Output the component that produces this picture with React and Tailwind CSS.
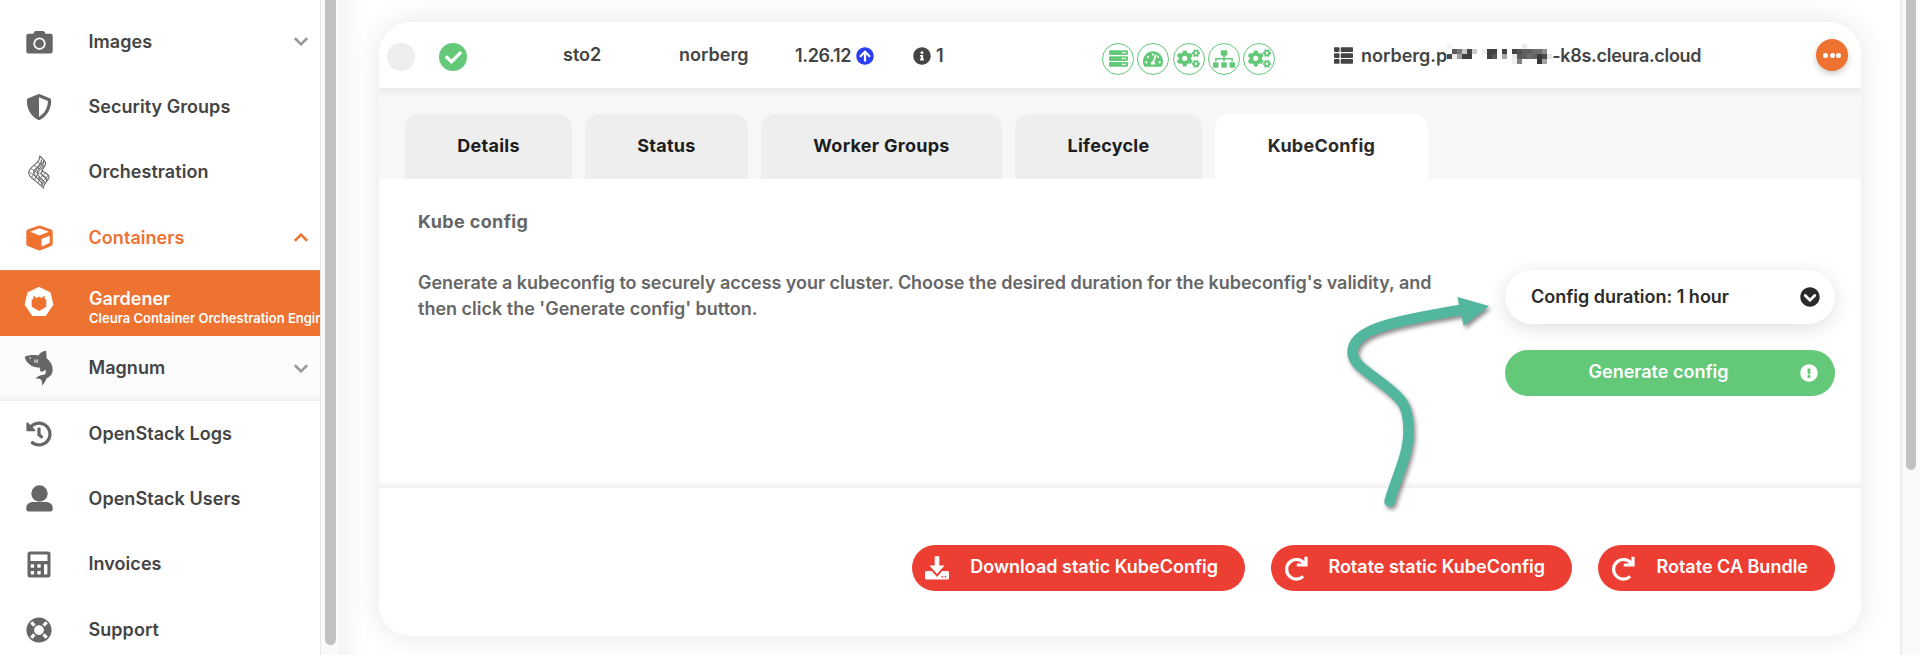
import React from "react";
import {
  FaShieldAlt,
  FaHistory,
  FaLifeRing,
  FaCheck,
  FaServer,
  FaTachometerAlt,
  FaCogs,
  FaSitemap,
  FaThList,
  FaInfoCircle,
  FaArrowCircleUp,
  FaChevronCircleDown,
  FaExclamationCircle,
} from "react-icons/fa";

const CameraIcon = () => (
  <svg width="27" height="24" viewBox="0 0 27 24" fill="currentColor">
    <path d="M8 2.2Q8.4 1 9.8 1H17Q18.4 1 18.8 2.2L19.4 3.7H24.5Q26.7 3.7 26.7 5.9V21.3Q26.7 23.5 24.5 23.5H2.5Q.3 23.5 .3 21.3V5.9Q.3 3.7 2.5 3.7H7.4Z" />
    <circle cx="13.5" cy="13.7" r="5.3" fill="none" stroke="#fff" strokeWidth="1.8" />
  </svg>
);

const HeatIcon = () => (
  <svg width="22" height="34" viewBox="0 0 22 34" fill="none" stroke="currentColor" strokeWidth="1.100">
    <path d="M11.500 .8C15 4 18 6 17.500 9C17 12 14 13.500 14.500 16C17 18 21.500 19.500 21 22.500C20.500 25.500 16 27.500 15.200 33C12 29 8 26.500 4.500 23.500C2 21.500 .6 20 .7 17.500C1 13 6 11 9 7.500C11.500 5 12.500 3.500 11.500 .8Z" />
    <path d="M13.500 4.500C14 9 10 11.500 7.500 14C4.500 17 5.500 19.500 8 22C11 25 14.500 27.500 15.200 31M15.500 5.500C16.500 10 12.500 12 10.500 14.500C8 18 9.500 20 12 22.500C14.500 24.500 16.500 26 16 28.500M14.500 16C12.500 18 13 19.500 15 21C17 22.500 19 23.500 18.500 26" />
    <path d="M9.500 7L16.500 11.500M6 10.500L14.500 15.500M3 13.500L11.500 19M1 17L9 22M16.500 5.500L10 12.500L3.500 22.500M17 10L11 16L6.500 25M17.500 18L12.500 22.500L10 28M20.500 20L15.500 25.500L13 30.500M11.500 18L20.500 24M10 22.500L17.500 28" strokeWidth=".8" />
  </svg>
);

const CubeIcon = () => (
  <svg width="27" height="26" viewBox="0 0 27 26">
    <path
      d="M12.400 .8Q13.500 .3 14.600 .8L25.300 4.600Q26.700 5.200 26.700 6.700V18.700Q26.700 20.200 25.300 20.900L14.700 25.300Q13.500 25.800 12.300 25.300L1.700 20.900Q.3 20.200 .3 18.700V6.700Q.3 5.200 1.700 4.600Z"
      fill="currentColor"
    />
    <path d="M13.500 3.300L22.900 6.700L13.500 10.400L4.100 6.700Z" fill="#fff" />
    <path d="M15.600 14L23.700 10.700V18L15.600 21.600Z" fill="#fff" />
  </svg>
);

const GardenerIcon = () => (
  <svg width="30" height="30" viewBox="0 0 30 30">
    <path
      d="M15 .8L25.800 6L28.600 17.600L21.200 28.200H8.800L1.400 17.600L4.200 6Z"
      fill="#fff"
      stroke="#fff"
      strokeWidth="1.6"
      strokeLinejoin="round"
    />
    <path d="M9.300 8.400L12.500 11L15 9.500L17.500 11L20.700 8.400V12L22.300 12.500V19.800L15 24L7.700 19.800V12.500L9.300 12Z" fill="#ee7230" />
  </svg>
);

const SharkIcon = () => (
  <svg width="30" height="36" viewBox="0 0 30 36">
    <path
      d="M.7 6.800C4 5 9 4.600 14.500 5.400C16 3 19 .8 21.500 .8C22 .8 22.300 1.200 22.300 1.800L22.600 8.200C27.500 12 29.600 17.500 28.300 22.500C27.600 25 25.500 27.200 22.700 28.200C21.900 30.500 20.500 33 18 35.400C18.500 32.500 17.700 30.500 16.800 29.500C15.500 28.800 13.500 28.400 11.200 28.700C13.500 26 17 24.800 20 24.800C22 24 22.400 21.500 21.200 19.500C20.500 21 18.500 22.500 16.800 21.500C15.500 20.500 15.500 19 16.500 17.800C12.500 17.600 8 17 5.500 14.300C3 12.500 1.300 10 .7 6.800Z"
      fill="currentColor"
    />
    <path d="M11 9.500V13M13.200 9.300V12.800" stroke="#fff" strokeWidth="1" />
    <circle cx="6.300" cy="8" r=".8" fill="#fff" />
  </svg>
);

const UserIcon = () => (
  <svg width="27" height="27" viewBox="0 0 27 27" fill="currentColor">
    <circle cx="13.500" cy="8.500" r="8.200" />
    <path d="M7.500 17H19.500C24 17 26.700 19.500 26.700 23V24.200Q26.700 26.500 24.400 26.500H2.600Q.3 26.500 .3 24.200V23C.3 19.500 3 17 7.500 17Z" />
  </svg>
);

const CalculatorIcon = () => (
  <svg width="24" height="27" viewBox="0 0 24 27">
    <rect x=".5" y=".5" width="23" height="26" rx="2.500" fill="currentColor" />
    <g fill="#fff">
      <rect x="3.500" y="3.500" width="17" height="6.500" />
      <rect x="3.700" y="13.300" width="3.400" height="3.400" rx=".6" />
      <rect x="10.300" y="13.300" width="3.400" height="3.400" rx=".6" />
      <rect x="3.700" y="20" width="3.400" height="3.400" rx=".6" />
      <rect x="10.300" y="20" width="3.400" height="3.400" rx=".6" />
      <rect x="17" y="13.300" width="3.400" height="10.100" rx=".6" />
    </g>
  </svg>
);

const Chevron = ({ up }) => (
  <svg width="14" height="9" viewBox="0 0 14 9" fill="none" strokeWidth="2.600" className={up ? "text-[#ee7230]" : "text-[#999]"}>
    <path d={up ? "M.9 7.800L7 1.700L13.100 7.800" : "M.9 1.200L7 7.300L13.100 1.200"} stroke="currentColor" />
  </svg>
);

const DownloadIcon = () => (
  <svg width="24" height="25" viewBox="0 0 24 25" fill="#fff">
    <path d="M1.500 15H22.500Q24 15 24 16.500V22Q24 23.500 22.500 23.500H1.500Q0 23.500 0 22V16.500Q0 15 1.500 15Z" />
    <path d="M9.700 .3H14.300V9.500H19.800L12 18.500L4.200 9.500H9.700Z" stroke="#ec3e33" strokeWidth="3.200" />
    <path d="M9.700 .3H14.300V9.500H19.600L12 18L4.400 9.500H9.700Z" />
    <circle cx="17.300" cy="20.800" r=".9" fill="#ec3e33" />
    <circle cx="20.500" cy="20.800" r=".9" fill="#ec3e33" />
  </svg>
);

const RotateIcon = () => (
  <svg width="25" height="25" viewBox="0 0 25 25" fill="none" stroke="#fff" strokeWidth="3.200">
    <path d="M19.200 20.400A9.800 9.800 0 1 1 20.400 7.600" />
    <path d="M22 .8V9H12.800" />
    <path d="M17 8.500L22.500 3V9Z" fill="#fff" stroke="none" />
  </svg>
);

const nav = [
  { label: "Images", icon: <CameraIcon />, chevron: true },
  { label: "Security Groups", icon: <FaShieldAlt size={26} /> },
  { label: "Orchestration", icon: <HeatIcon /> },
  { label: "Containers", icon: <CubeIcon />, chevron: true, active: true },
];

const navBottom = [
  { label: "OpenStack Logs", icon: <FaHistory size={26} /> },
  { label: "OpenStack Users", icon: <UserIcon /> },
  { label: "Invoices", icon: <CalculatorIcon /> },
  { label: "Support", icon: <FaLifeRing size={26} /> },
];

function NavItem({ label, icon, chevron, active }) {
  return (
    <div className={`flex h-[65.33px] shrink-0 items-center pr-[12.500px] ${active ? "text-[#ee7230]" : "text-[#666]"}`}>
      <span className="flex w-[78px] justify-center">{icon}</span>
      <span className={`ml-[10.500px] flex-1 tracking-[0.050px] ${active ? "" : "text-[#444]"}`}>{label}</span>
      {chevron && <Chevron up={active} />}
    </div>
  );
}

function Sidebar() {
  return (
    <aside className="flex h-full w-[339px] shrink-0">
      <nav className="flex w-[320px] flex-col overflow-hidden pt-[9px]">
        {nav.map((item) => (
          <NavItem key={item.label} {...item} />
        ))}
        <div className="flex h-[65.33px] shrink-0 border-t border-[#e2824f] bg-[#ee7230] text-white">
          <span className="flex w-[77px] shrink-0 justify-center pt-[16px]">
            <GardenerIcon />
          </span>
          <div className="ml-[12px] pt-[17px] whitespace-nowrap">
            <div className="leading-[22px]">Gardener</div>
            <div className="text-[13px] leading-[17px]">Cleura Container Orchestration Engine</div>
          </div>
        </div>
        <div className="shrink-0 bg-[#fcfcfc] shadow-[inset_0_-10px_10px_-8px_rgba(0,0,0,0.07)]">
          <NavItem label="Magnum" icon={<SharkIcon />} chevron />
        </div>
        {navBottom.map((item) => (
          <NavItem key={item.label} {...item} />
        ))}
      </nav>
      <div className="w-[19px] border-l border-[#e6e6e6] bg-[#fafafa] pl-[4px]">
        <div className="h-[645px] w-[11px] rounded-b-full bg-[#c1c1c1]" />
      </div>
    </aside>
  );
}

const statusIcons = [
  <FaServer size={19} />,
  <FaTachometerAlt size={20} />,
  <FaCogs size={23} />,
  <FaSitemap size={22} />,
  <FaCogs size={23} />,
];

/* Redacted part of the host name: [column, row, grey level] on a 5px grid */
const mosaic = [
  [0, 0, 245], [15, 0, 236],
  [1, 1, 90], [2, 1, 120], [3, 1, 200], [4, 1, 70], [5, 1, 205], [7, 1, 238], [8, 1, 66], [9, 1, 66], [11, 1, 66],
  [13, 1, 66], [14, 1, 80], [15, 1, 95], [16, 1, 95], [17, 1, 110], [18, 1, 110], [19, 1, 140],
  [0, 2, 75], [1, 2, 235], [2, 2, 160], [3, 2, 66], [4, 2, 66], [8, 2, 66], [9, 2, 90], [11, 2, 165], [13, 2, 235],
  [14, 2, 90], [15, 2, 95], [16, 2, 110], [17, 2, 100], [18, 2, 60], [19, 2, 75], [20, 2, 232],
  [13, 3, 238], [14, 3, 130], [18, 3, 55], [19, 3, 165],
];

function ClusterRow() {
  return (
    <div className="relative z-10 grid h-[66px] shrink-0 grid-cols-[52px_132px_116px_116px_118px_188px_232px_475px_1fr] items-center bg-white pl-[8px] text-[#444] shadow-[0_4px_8px_rgba(0,0,0,0.06)]">
      <span className="mt-[4px] size-[28px] rounded-full bg-[#eee]" />
      <span className="mt-[4px] flex size-[28px] items-center justify-center rounded-full bg-[#63c979] text-white">
        <FaCheck size={17} />
      </span>
      <span className="-ml-[8px]">sto2</span>
      <span className="-ml-[8px] tracking-[0.050px]">norberg</span>
      <span className="mt-[2px] -ml-[8px] flex items-center gap-[5px] tracking-[-0.35px]">
        1.26.12 <FaArrowCircleUp size={18} className="text-[#2b3ff2]" />
      </span>
      <span className="mt-[2px] -ml-[8px] flex items-center gap-[5px]">
        <FaInfoCircle size={18} /> 1
      </span>
      <span className="mt-[7px] -ml-[7px] flex gap-[3.250px]">
        {statusIcons.map((icon, i) => (
          <span
            key={i}
            className="flex size-[32px] shrink-0 items-center justify-center rounded-full border-[1.500px] border-[#63c979] text-[#63c979]"
          >
            {icon}
          </span>
        ))}
      </span>
      <span className="mt-[1px] -ml-[7px] flex items-center">
        <FaThList size={19} />
        <span className="ml-[8px]">norberg.p</span>
        <svg width="105" height="20" viewBox="0 0 105 20" shapeRendering="crispEdges" className="mt-[-3px]">
          {mosaic.map(([x, y, v]) => (
            <rect key={`${x}-${y}`} x={x * 5} y={y * 5} width="5" height="5" fill={`rgb(${v},${v},${v})`} />
          ))}
        </svg>
        <span className="tracking-[-0.3px]">-k8s.cleura.cloud</span>
      </span>
      <span className="flex size-[32px] items-center justify-center gap-[1.500px] rounded-full bg-[#ee7230] shadow-[0_3px_6px_rgba(0,0,0,0.2)]">
        <i className="size-[5px] rounded-full bg-white" />
        <i className="size-[5px] rounded-full bg-white" />
        <i className="size-[5px] rounded-full bg-white" />
      </span>
    </div>
  );
}

function Tabs() {
  const tab = "flex h-[65px] items-center justify-center rounded-t-[14px] pb-[1px]";
  return (
    <div className="flex h-[91px] shrink-0 items-end gap-[13px] bg-[#f7f7f7] pl-[26px] font-bold tracking-[0.27px] text-[#1d1d1d]">
      <div className={`${tab} w-[167px] bg-[#eee]`}>Details</div>
      <div className={`${tab} w-[163px] bg-[#eee]`}>Status</div>
      <div className={`${tab} w-[241px] bg-[#eee]`}>Worker Groups</div>
      <div className={`${tab} w-[187px] bg-[#eee]`}>Lifecycle</div>
      <div className={`${tab} w-[213px] bg-white text-[#2b2b2b]`}>KubeConfig</div>
    </div>
  );
}

function RedButton({ icon, children, className }) {
  return (
    <button className={`flex h-[46px] items-center rounded-full bg-[#ec3e33] pl-[12.500px] text-white ${className}`}>
      {icon}
      <span className="-mt-[3px] ml-auto pr-[27px]">{children}</span>
    </button>
  );
}

function Arrow() {
  return (
    <svg
      className="pointer-events-none absolute top-[285px] left-[1340px] z-20 drop-shadow-[2px_3px_2px_rgba(0,0,0,0.45)]"
      width="160"
      height="230"
      viewBox="1340 285 160 230"
    >
      <path
        d="M1389.500 501.500C1397 475 1408.500 455 1408.500 431C1408.500 405 1403 399 1379 381C1364 369.500 1352.500 363 1352.500 352C1352.500 330 1388 322 1463 309.500"
        fill="none"
        stroke="#53b7a0"
        strokeWidth="10.500"
        strokeLinecap="round"
      />
      <path d="M1457.400 297L1489 306L1463.700 325.700Z" fill="#53b7a0" />
    </svg>
  );
}

export default function App() {
  return (
    <div className="relative flex h-[655px] w-full overflow-hidden bg-white font-['Inter',sans-serif] text-[18px] leading-[26px] font-semibold">
      <Sidebar />
      <main className="flex h-full flex-1 overflow-hidden bg-linear-to-r from-[#f4f4f4] to-white to-[24px] pt-[22px] pl-[40px]">
        <section className="flex h-[614px] w-[1482px] flex-col overflow-hidden rounded-[32px] bg-white shadow-[0_0_30px_rgba(0,0,0,0.1)]">
          <ClusterRow />
          <Tabs />
          <div className="flex h-[309px] shrink-0 justify-between pr-[26px] pl-[39px] text-[#666]">
            <div className="pt-[30px]">
              <h2 className="font-bold tracking-[0.370px]">Kube config</h2>
              <p className="mt-[35px] w-[1030px] tracking-[-0.050px]">
                Generate a kubeconfig to securely access your cluster. Choose the desired duration for the kubeconfig's
                validity, and
                <br />
                <span className="tracking-normal">then click the 'Generate config' button.</span>
              </p>
            </div>
            <div className="flex w-[330px] flex-col gap-[26px] pt-[91px]">
              <button className="flex h-[54px] items-center justify-between rounded-full bg-white pr-[15px] pl-[26px] text-[#2b2b2b] shadow-[0_4px_20px_rgba(0,0,0,0.13)]">
                <span className="-mt-[1px]">Config duration: 1 hour</span>
                <FaChevronCircleDown size={20} />
              </button>
              <button className="flex h-[46px] items-center rounded-full bg-[#63c979] pr-[17px] text-white">
                <span className="-mt-[2px] ml-[83.500px] flex-1 text-left">Generate config</span>
                <FaExclamationCircle size={18} />
              </button>
            </div>
          </div>
          <div className="-mt-[8px] h-[8px] shrink-0 border-b border-[#efefef] bg-linear-to-b from-transparent to-[#f4f4f4]" />
          <div className="flex gap-[26px] self-end pt-[57px] pr-[26px]">
            <RedButton icon={<DownloadIcon />} className="w-[333px]">
              Download static KubeConfig
            </RedButton>
            <RedButton icon={<RotateIcon />} className="w-[301px]">
              Rotate static KubeConfig
            </RedButton>
            <RedButton icon={<RotateIcon />} className="w-[237px]">
              Rotate CA Bundle
            </RedButton>
          </div>
        </section>
      </main>
      <div className="w-[20px] shrink-0 border-l-2 border-[#ececec] bg-[#fafafa] pl-[4px]">
        <div className="h-[470px] w-[10px] rounded-b-full bg-[#c1c1c1]" />
      </div>
      <Arrow />
    </div>
  );
}
